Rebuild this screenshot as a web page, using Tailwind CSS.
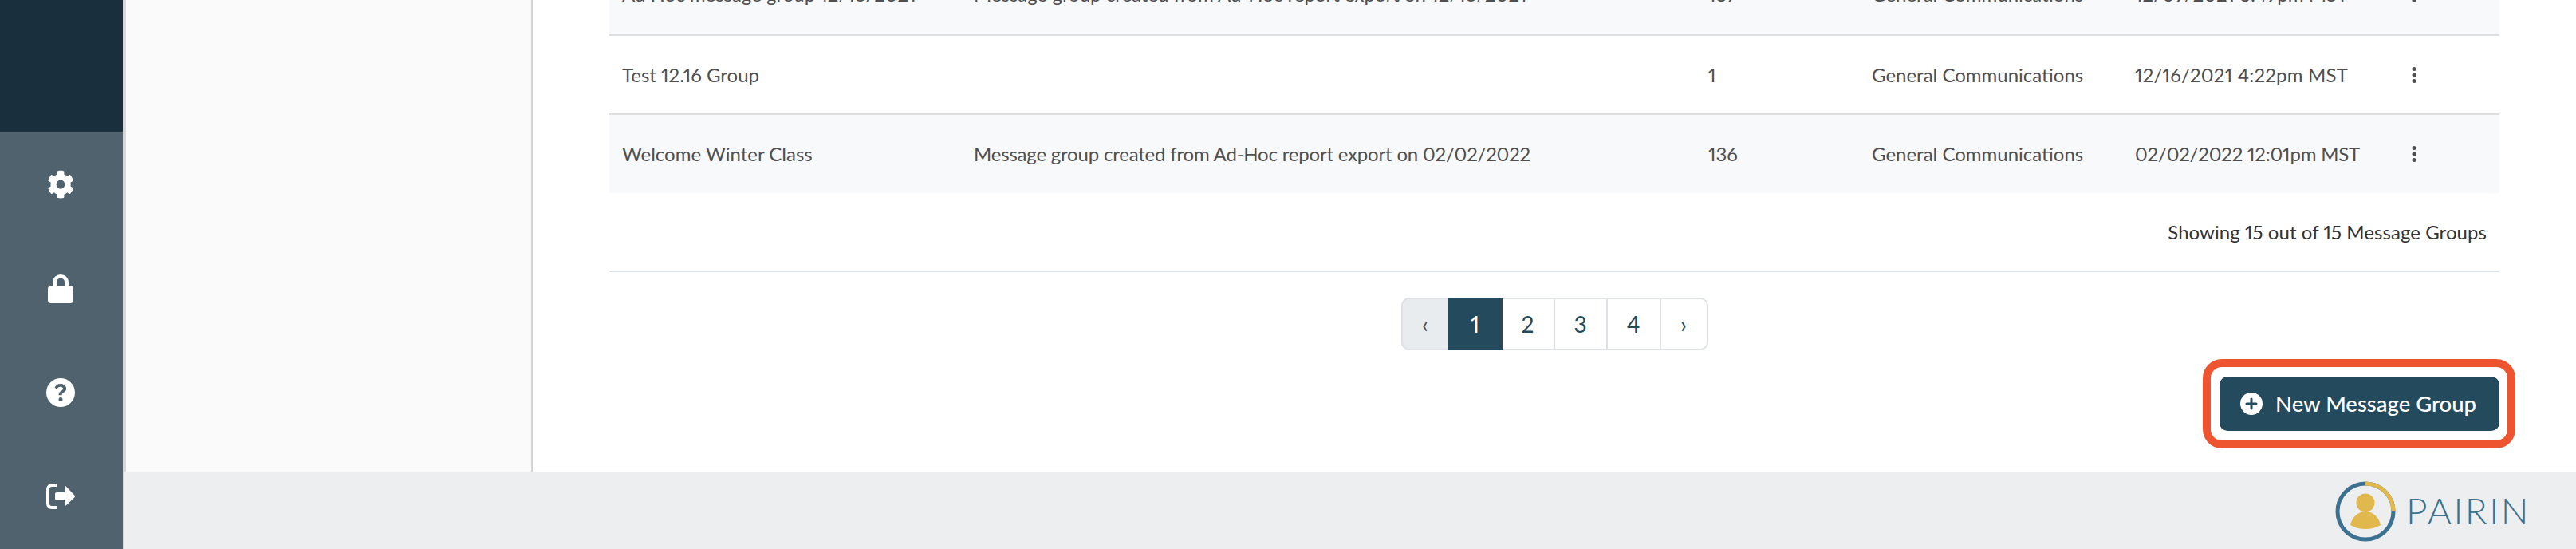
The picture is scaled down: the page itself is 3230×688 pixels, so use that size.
<!DOCTYPE html>
<html lang="en">

<head>
    <meta charset="UTF-8">
    <title>Message Groups</title>
    <script src="https://cdn.jsdelivr.net/npm/@tailwindcss/browser@4"></script>
</head>

<body class="bg-white overflow-hidden font-['Lato',sans-serif] text-[#4f4f4f] proportional-nums">
    <div class="flex h-[688px] w-[3230px]">
        <!-- sidebar -->
        <aside class="flex flex-col w-[158px] shrink-0 border-r-4 border-[#d8d8d8] bg-[#4f626d]">
            <div class="h-[166px] bg-[#192f3d]"></div>
            <nav class="flex flex-col items-center pr-[2px]">
                <a class="flex h-[131px] w-full items-center justify-center">
                    <svg class="w-[34px] h-[36px] fill-white" viewBox="0 0 512 512" preserveAspectRatio="none"><path fill-rule="evenodd" d="M487 316l-42-24c4-23 4-47 0-70l42-24c5-3 7-9 6-14-11-35-30-67-55-94-4-4-10-5-15-2l-42 24c-18-15-38-27-60-35V28c0-6-4-11-9-12-36-8-73-8-108 0-6 1-10 6-10 12v49c-22 8-42 20-60 35L92 88c-5-3-11-2-15 2-25 27-44 59-55 94-2 5 1 11 6 14l42 24c-4 23-4 47 0 70l-42 24c-5 3-8 9-6 14 11 35 30 67 55 94 4 4 10 5 15 2l42-24c18 15 38 27 60 35v49c0 6 4 11 10 12 36 8 73 8 108 0 5-1 9-6 9-12v-49c22-8 42-20 60-35l42 24c5 3 11 2 15-2 25-27 44-59 55-94 1-5-1-11-6-14zM256 336c-44 0-80-36-80-80s36-80 80-80 80 36 80 80-36 80-80 80z"/></svg>
                </a>
                <a class="flex h-[131px] w-full items-center justify-center">
                    <svg class="w-[32px] h-[36px] fill-white" viewBox="0 0 32 38" preserveAspectRatio="none"><path d="M6 16v-6a10 10 0 0 1 20 0v6h-5v-6a5 5 0 0 0-10 0v6z"/><rect x="0" y="15" width="32" height="23" rx="4"/></svg>
                </a>
                <a class="flex h-[129px] w-full items-center justify-center">
                    <svg class="w-[36px] h-[36px] fill-white" viewBox="0 0 36 36"><path fill-rule="evenodd" d="M18 0a18 18 0 1 1 0 36a18 18 0 0 1 0-36zM18 7c-4 0-6.500 2-7.500 5l3.200 1.500c.6-1.600 2-2.700 4.100-2.700 1.900 0 3.200 1 3.200 2.300 0 1.200-.9 1.900-2.400 2.800-1.800 1-2.900 2.200-2.900 4.400v1h4v-.7c0-1.100.6-1.700 2.100-2.600 2-1.200 3.300-2.600 3.300-5C25.100 9.300 22 7 18 7zM18 24a2.500 2.500 0 1 0 0 5a2.500 2.500 0 0 0 0-5z"/></svg>
                </a>
                <a class="flex h-[132px] w-full items-center justify-center">
                    <svg class="w-[36px] h-[32px] fill-white" viewBox="0 0 36 32"><path d="M13 0H7a7 7 0 0 0-7 7v18a7 7 0 0 0 7 7h6v-4H7a3 3 0 0 1-3-3V7a3 3 0 0 1 3-3h6z"/><path d="M23 4.500c0-1 1.200-1.500 2-.8l10.500 11c.6.700.6 1.800 0 2.500L25 27.300c-.8.700-2 .2-2-.8V21H13a2 2 0 0 1-2-2v-6a2 2 0 0 1 2-2h10z"/></svg>
                </a>
            </nav>
        </aside>

        <div class="flex flex-col flex-1 min-w-0">
            <div class="flex h-[591px] overflow-hidden">
                <!-- side panel -->
                <div class="w-[510px] shrink-0 bg-[#fafafa] border-r-2 border-[#d3d3d3]"></div>

                <!-- main content -->
                <main class="flex-1 pl-[96px] pr-[96px]">
                    <div class="-mt-[55px] text-[24px] leading-[30px]">
                        <div class="flex items-center h-[100px] pb-[2px] bg-[#f8f9fb] border-b-2 border-[#dfdfdf]">
                            <span class="w-[457px] pl-[16px] shrink-0">Ad Hoc message group 12/16/2021</span>
                            <span class="w-[921px] shrink-0">Message group created from Ad-Hoc report export on 12/16/2021</span>
                            <span class="w-[205px] shrink-0">137</span>
                            <span class="w-[330px] shrink-0">General Communications</span>
                            <span class="w-[347px] shrink-0">12/09/2021 3:49pm MST</span>
                            <svg class="w-[6px] h-[20px] fill-[#4f4f4f]" viewBox="0 0 6 20"><circle cx="3" cy="2.500" r="2.500"/><circle cx="3" cy="10" r="2.500"/><circle cx="3" cy="17.500" r="2.500"/></svg>
                        </div>
                        <div class="flex items-center h-[99px] bg-white border-b-2 border-[#dfdfdf]">
                            <span class="w-[457px] pl-[16px] shrink-0">Test 12.16 Group</span>
                            <span class="w-[921px] shrink-0"></span>
                            <span class="w-[205px] shrink-0">1</span>
                            <span class="w-[330px] shrink-0">General Communications</span>
                            <span class="w-[347px] shrink-0 tracking-[0.2px]">12/16/2021 4:22pm MST</span>
                            <svg class="w-[6px] h-[20px] fill-[#4f4f4f]" viewBox="0 0 6 20"><circle cx="3" cy="2.500" r="2.500"/><circle cx="3" cy="10" r="2.500"/><circle cx="3" cy="17.500" r="2.500"/></svg>
                        </div>
                        <div class="flex items-center h-[98px] bg-[#f8f9fb]">
                            <span class="w-[457px] pl-[16px] shrink-0">Welcome Winter Class</span>
                            <span class="w-[921px] shrink-0 tracking-[-0.2px]">Message group created from Ad-Hoc report export on 02/02/2022</span>
                            <span class="w-[205px] shrink-0">136</span>
                            <span class="w-[330px] shrink-0">General Communications</span>
                            <span class="w-[347px] shrink-0 tracking-[-0.2px]">02/02/2022 12:01pm MST</span>
                            <svg class="w-[6px] h-[20px] fill-[#4f4f4f]" viewBox="0 0 6 20"><circle cx="3" cy="2.500" r="2.500"/><circle cx="3" cy="10" r="2.500"/><circle cx="3" cy="17.500" r="2.500"/></svg>
                        </div>
                    </div>

                    <div class="flex items-center justify-end h-[99px] pr-[16px] border-b-2 border-[#dee2e6] text-[24px] tracking-[0.06px] text-[#333333]">Showing 15 out of 15 Message Groups</div>

                    <!-- pagination -->
                    <div class="flex justify-center mt-[32px]">
                        <ul class="flex h-[66px] text-[28px] text-[#244a5e] border-2 border-[#dee2e6] rounded-[10px]">
                            <li class="flex items-center justify-center w-[59px] -my-[2px] -ml-[2px] bg-[#e9ecef] border-y-2 border-l-2 border-[#dee2e6] rounded-l-[10px] text-[#4f4f4f]">‹</li>
                            <li class="flex items-center justify-center w-[68px] -my-[2px] bg-[#244a5e] text-white">1</li>
                            <li class="flex items-center justify-center w-[66px] border-r-2 border-[#dee2e6]">2</li>
                            <li class="flex items-center justify-center w-[66px] border-r-2 border-[#dee2e6]">3</li>
                            <li class="flex items-center justify-center w-[67px] border-r-2 border-[#dee2e6]">4</li>
                            <li class="flex items-center justify-center w-[57px]">›</li>
                        </ul>
                    </div>

                    <!-- new group button with callout -->
                    <div class="flex justify-end mt-[11px] -mr-[20px]">
                        <div class="py-[12px] pl-[11px] pr-[10px] border-[10px] border-[#ee5430] rounded-[24px]">
                            <button class="flex items-center h-[68px] w-[351px] pl-[26px] rounded-[10px] bg-[#244a5e] text-white text-[27.5px] font-medium">
                                <svg class="w-[28px] h-[28px] mr-[16px] shrink-0" viewBox="0 0 28 28"><circle cx="14" cy="14" r="14" fill="#fff"/><path d="M14 8v12M8 14h12" stroke="#244a5e" stroke-width="3" stroke-linecap="round"/></svg>
                                New Message Group
                            </button>
                        </div>
                    </div>
                </main>
            </div>

            <!-- footer -->
            <footer class="flex flex-1 items-center justify-end -ml-[2px] pr-[57px] bg-[#edeef0]">
                <svg class="w-[76px] h-[76px] mt-[2px] mr-[13px] shrink-0" viewBox="0 0 76 76">
                    <circle cx="38" cy="38" r="35" fill="none" stroke="#3d7190" stroke-width="5"/>
                    <path d="M38 3a35 35 0 0 1 35 35" fill="none" stroke="#e0b84c" stroke-width="5"/>
                    <circle cx="38" cy="27" r="11.500" fill="#e0b84c"/>
                    <path d="M19 55c2-10 10-17 19-17s17 7 19 17c-5 3-12 5-19 5s-14-2-19-5z" fill="#e0b84c"/>
                </svg>
                <span class="text-[46px] leading-none font-light tracking-[2.5px] text-[#3d7190]">PAIRIN</span>
            </footer>
        </div>
    </div>
</body>

</html>
